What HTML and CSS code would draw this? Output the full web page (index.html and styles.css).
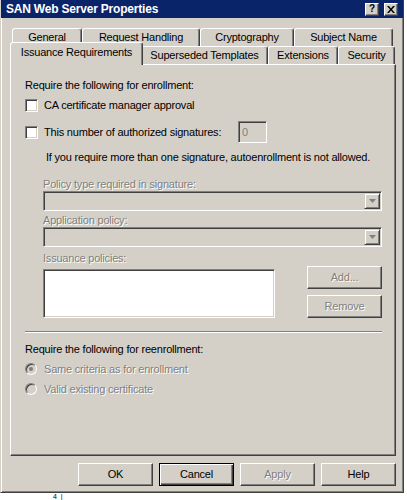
FILE: index.html
```html
<!DOCTYPE html>
<html>
<head>
<meta charset="utf-8">
<link rel="stylesheet" href="styles.css">
</head>
<body>
<div class="window">
  <div class="titlebar">
    <span class="title">SAN Web Server Properties</span>
    <div class="capbtns">
      <span class="capbtn">?</span>
      <span class="capbtn"><svg width="8" height="7" viewBox="0 0 8 7"><path d="M0 0h2l2 2.5L6 0h2L5 3.5 8 7H6L4 4.5 2 7H0l3-3.5z" fill="#000"/></svg></span>
    </div>
  </div>

  <div class="tabs">
    <div class="tabrow">
      <div class="tab t-general">General</div>
      <div class="tab t-request">Request Handling</div>
      <div class="tab t-crypto">Cryptography</div>
      <div class="tab t-subject">Subject Name</div>
    </div>
    <div class="tabrow">
      <div class="tab sel t-issuance">Issuance Requirements</div>
      <div class="tab t-superseded">Superseded Templates</div>
      <div class="tab t-ext">Extensions</div>
      <div class="tab t-sec">Security</div>
    </div>
  </div>

  <div class="panel">
    <div class="heading">Require the following for enrollment:</div>
    <div class="check row1">
      <span class="cb"></span>
      <span>CA certificate manager approval</span>
    </div>
    <div class="check row2">
      <span class="cb"></span>
      <span class="siglabel">This number of authorized signatures:</span>
      <span class="num">0</span>
    </div>
    <div class="note">If you require more than one signature, autoenrollment is not allowed.</div>

    <div class="indent">
      <div class="flabel disabled lbl1">Policy type required in signature:</div>
      <div class="combo c1"><span class="drop"><svg width="7" height="4" viewBox="0 0 7 4"><path d="M0 0h7L3.5 4z" fill="#808080"/></svg></span></div>
      <div class="flabel disabled lbl2">Application policy:</div>
      <div class="combo c2"><span class="drop"><svg width="7" height="4" viewBox="0 0 7 4"><path d="M0 0h7L3.5 4z" fill="#808080"/></svg></span></div>
      <div class="flabel disabled lbl3">Issuance policies:</div>
      <div class="listrow">
        <div class="list"></div>
        <div class="side">
          <div class="btn disabled">Add...</div>
          <div class="btn disabled">Remove</div>
        </div>
      </div>
    </div>

    <div class="sep"></div>
    <div class="heading h2">Require the following for reenrollment:</div>
    <div class="radio r1">
      <span class="rb on"></span>
      <span class="disabled">Same criteria as for enrollment</span>
    </div>
    <div class="radio r2">
      <span class="rb"></span>
      <span class="disabled">Valid existing certificate</span>
    </div>
  </div>

  <div class="actions">
    <div class="btn">OK</div>
    <div class="btn default">Cancel</div>
    <div class="btn disabled">Apply</div>
    <div class="btn">Help</div>
  </div>
</div>
<div class="footer">4&nbsp; |</div>
</body>
</html>
```

FILE: styles.css
```css
* { box-sizing: border-box; }
html, body { margin: 0; padding: 0; background: #fff; }
body {
  font-family: "Liberation Sans", Arial, sans-serif;
  font-size: 11px;
  line-height: 13px;
  letter-spacing: -0.2px;
  color: #000;
  width: 407px;
  height: 500px;
  overflow: hidden;
}

.window {
  width: 404px;
  height: 493px;
  background: #d4d0c8;
  border-left: 1px solid #d4d0c8;
  border-right: 1px solid #404040;
  border-bottom: 1px solid #404040;
  box-shadow: inset 1px 0 #fff, inset -1px -1px #808080;
  display: flex;
  flex-direction: column;
}

.titlebar {
  height: 18px;
  flex: none;
  background: #0a246a;
  color: #fff;
  display: flex;
  align-items: center;
  padding: 0 5px;
}
.title { font-weight: bold; flex: 1; font-size: 12px; letter-spacing: -0.2px; }
.capbtns { display: flex; gap: 5px; }
.capbtn {
  width: 14px;
  height: 13px;
  background: #d4d0c8;
  border: 1px solid;
  border-color: #fff #404040 #404040 #fff;
  box-shadow: inset -1px -1px #808080;
  display: grid;
  place-items: center;
  color: #000;
  font-weight: bold;
  font-size: 10px;
  line-height: 1;
  letter-spacing: 0;
}

.tabs { margin: 10px 0 0 11px; flex: none; }
.tabrow { display: flex; height: 18px; align-items: flex-end; }
.tab {
  height: 18px;
  flex: none;
  background: #d4d0c8;
  border: 1px solid;
  border-bottom: none;
  border-color: #fff #404040 transparent #fff;
  border-radius: 3px 3px 0 0;
  box-shadow: inset -1px 0 #808080;
  display: flex;
  align-items: center;
  justify-content: center;
  padding-bottom: 1px;
  white-space: nowrap;
}
.tab.sel {
  height: 23px;
  margin: 0 -2px -1px -2px;
  position: relative;
  z-index: 1;
  padding-bottom: 4px;
}
.t-general { width: 70px; }
.t-request { width: 118px; }
.t-crypto { width: 94px; }
.t-subject { width: 99px; }
.t-issuance { width: 133px; }
.t-superseded { width: 127px; }
.t-ext { width: 70px; }
.t-sec { width: 57px; }

.panel {
  flex: none;
  margin-left: 9px;
  width: 386px;
  height: 392px;
  border: 1px solid;
  border-color: #fff #404040 #404040 #fff;
  box-shadow: inset -1px -1px #808080;
  padding: 14px 13px 0 14px;
}

.heading { height: 13px; }
.check { display: flex; align-items: center; gap: 6px; }
.row1 { height: 13px; margin-top: 7px; }
.row2 { height: 22px; margin-top: 9px; }
.cb {
  flex: none;
  width: 13px;
  height: 13px;
  background: #fff;
  border: 1px solid;
  border-color: #808080 #fff #fff #808080;
  box-shadow: inset 1px 1px #404040, inset -1px -1px #d4d0c8;
}
.siglabel { flex: none; width: 188px; }
.num {
  flex: none;
  width: 29px;
  height: 22px;
  background: #d4d0c8;
  color: #808080;
  border: 1px solid;
  border-color: #808080 #fff #fff #808080;
  box-shadow: inset 1px 1px #404040, inset -1px -1px #d4d0c8;
  padding-left: 3px;
  display: flex;
  align-items: center;
}
.note { margin-top: 8px; padding-left: 21px; white-space: nowrap; }

.disabled { color: #808080; text-shadow: 1px 1px #fff; }

.indent { padding-left: 18px; }
.flabel { line-height: 11px; height: 11px; }
.lbl1 { margin-top: 15px; }
.lbl2 { margin-top: 4px; }
.lbl3 { margin-top: 6px; }
.combo {
  height: 20px;
  margin-top: 1px;
  background: #d4d0c8;
  border: 1px solid;
  border-color: #808080 #fff #fff #808080;
  box-shadow: inset 1px 1px #404040, inset -1px -1px #d4d0c8;
  padding: 1px;
  display: flex;
  justify-content: flex-end;
}
.drop {
  width: 16px;
  height: 16px;
  background: #d4d0c8;
  border: 1px solid;
  border-color: #d4d0c8 #404040 #404040 #d4d0c8;
  box-shadow: inset 1px 1px #fff, inset -1px -1px #808080;
  display: grid;
  place-items: center;
}
.drop svg { display: block; }

.listrow { display: flex; margin-top: 2px; }
.list {
  width: 232px;
  height: 49px;
  margin-top: 3px;
  background: #fff;
  border: 1px solid;
  border-color: #808080 #fff #fff #808080;
  box-shadow: inset 1px 1px #404040, inset -1px -1px #d4d0c8;
}
.side { margin-left: 32px; display: flex; flex-direction: column; gap: 6px; }

.btn {
  width: 75px;
  height: 23px;
  flex: none;
  background: #d4d0c8;
  border: 1px solid;
  border-color: #fff #404040 #404040 #fff;
  box-shadow: inset -1px -1px #808080;
  display: flex;
  align-items: center;
  justify-content: center;
}
.btn.default {
  border-color: #000;
  box-shadow: inset 1px 1px #fff, inset -1px -1px #404040, inset -2px -2px #808080;
}

.sep {
  height: 2px;
  margin-top: 13px;
  border-top: 1px solid #808080;
  border-bottom: 1px solid #fff;
}
.h2 { margin-top: 10px; }

.radio { display: flex; align-items: center; gap: 7px; height: 12px; }
.r1 { margin-top: 7px; }
.r2 { margin-top: 8px; }
.rb {
  flex: none;
  width: 12px;
  height: 12px;
  border-radius: 50%;
  background: #d4d0c8;
  border: 1px solid;
  border-color: #808080 #fff #fff #808080;
  box-shadow: inset 1px 1px #404040;
  display: grid;
  place-items: center;
}
.rb.on::after {
  content: "";
  width: 4px;
  height: 4px;
  border-radius: 50%;
  background: #808080;
}

.actions {
  flex: none;
  display: flex;
  justify-content: flex-end;
  gap: 6px;
  margin: 7px 0 0 9px;
  width: 386px;
}

.footer {
  height: 7px;
  padding-left: 53px;
  font-size: 7px;
  line-height: 7px;
  letter-spacing: 0;
}
```
